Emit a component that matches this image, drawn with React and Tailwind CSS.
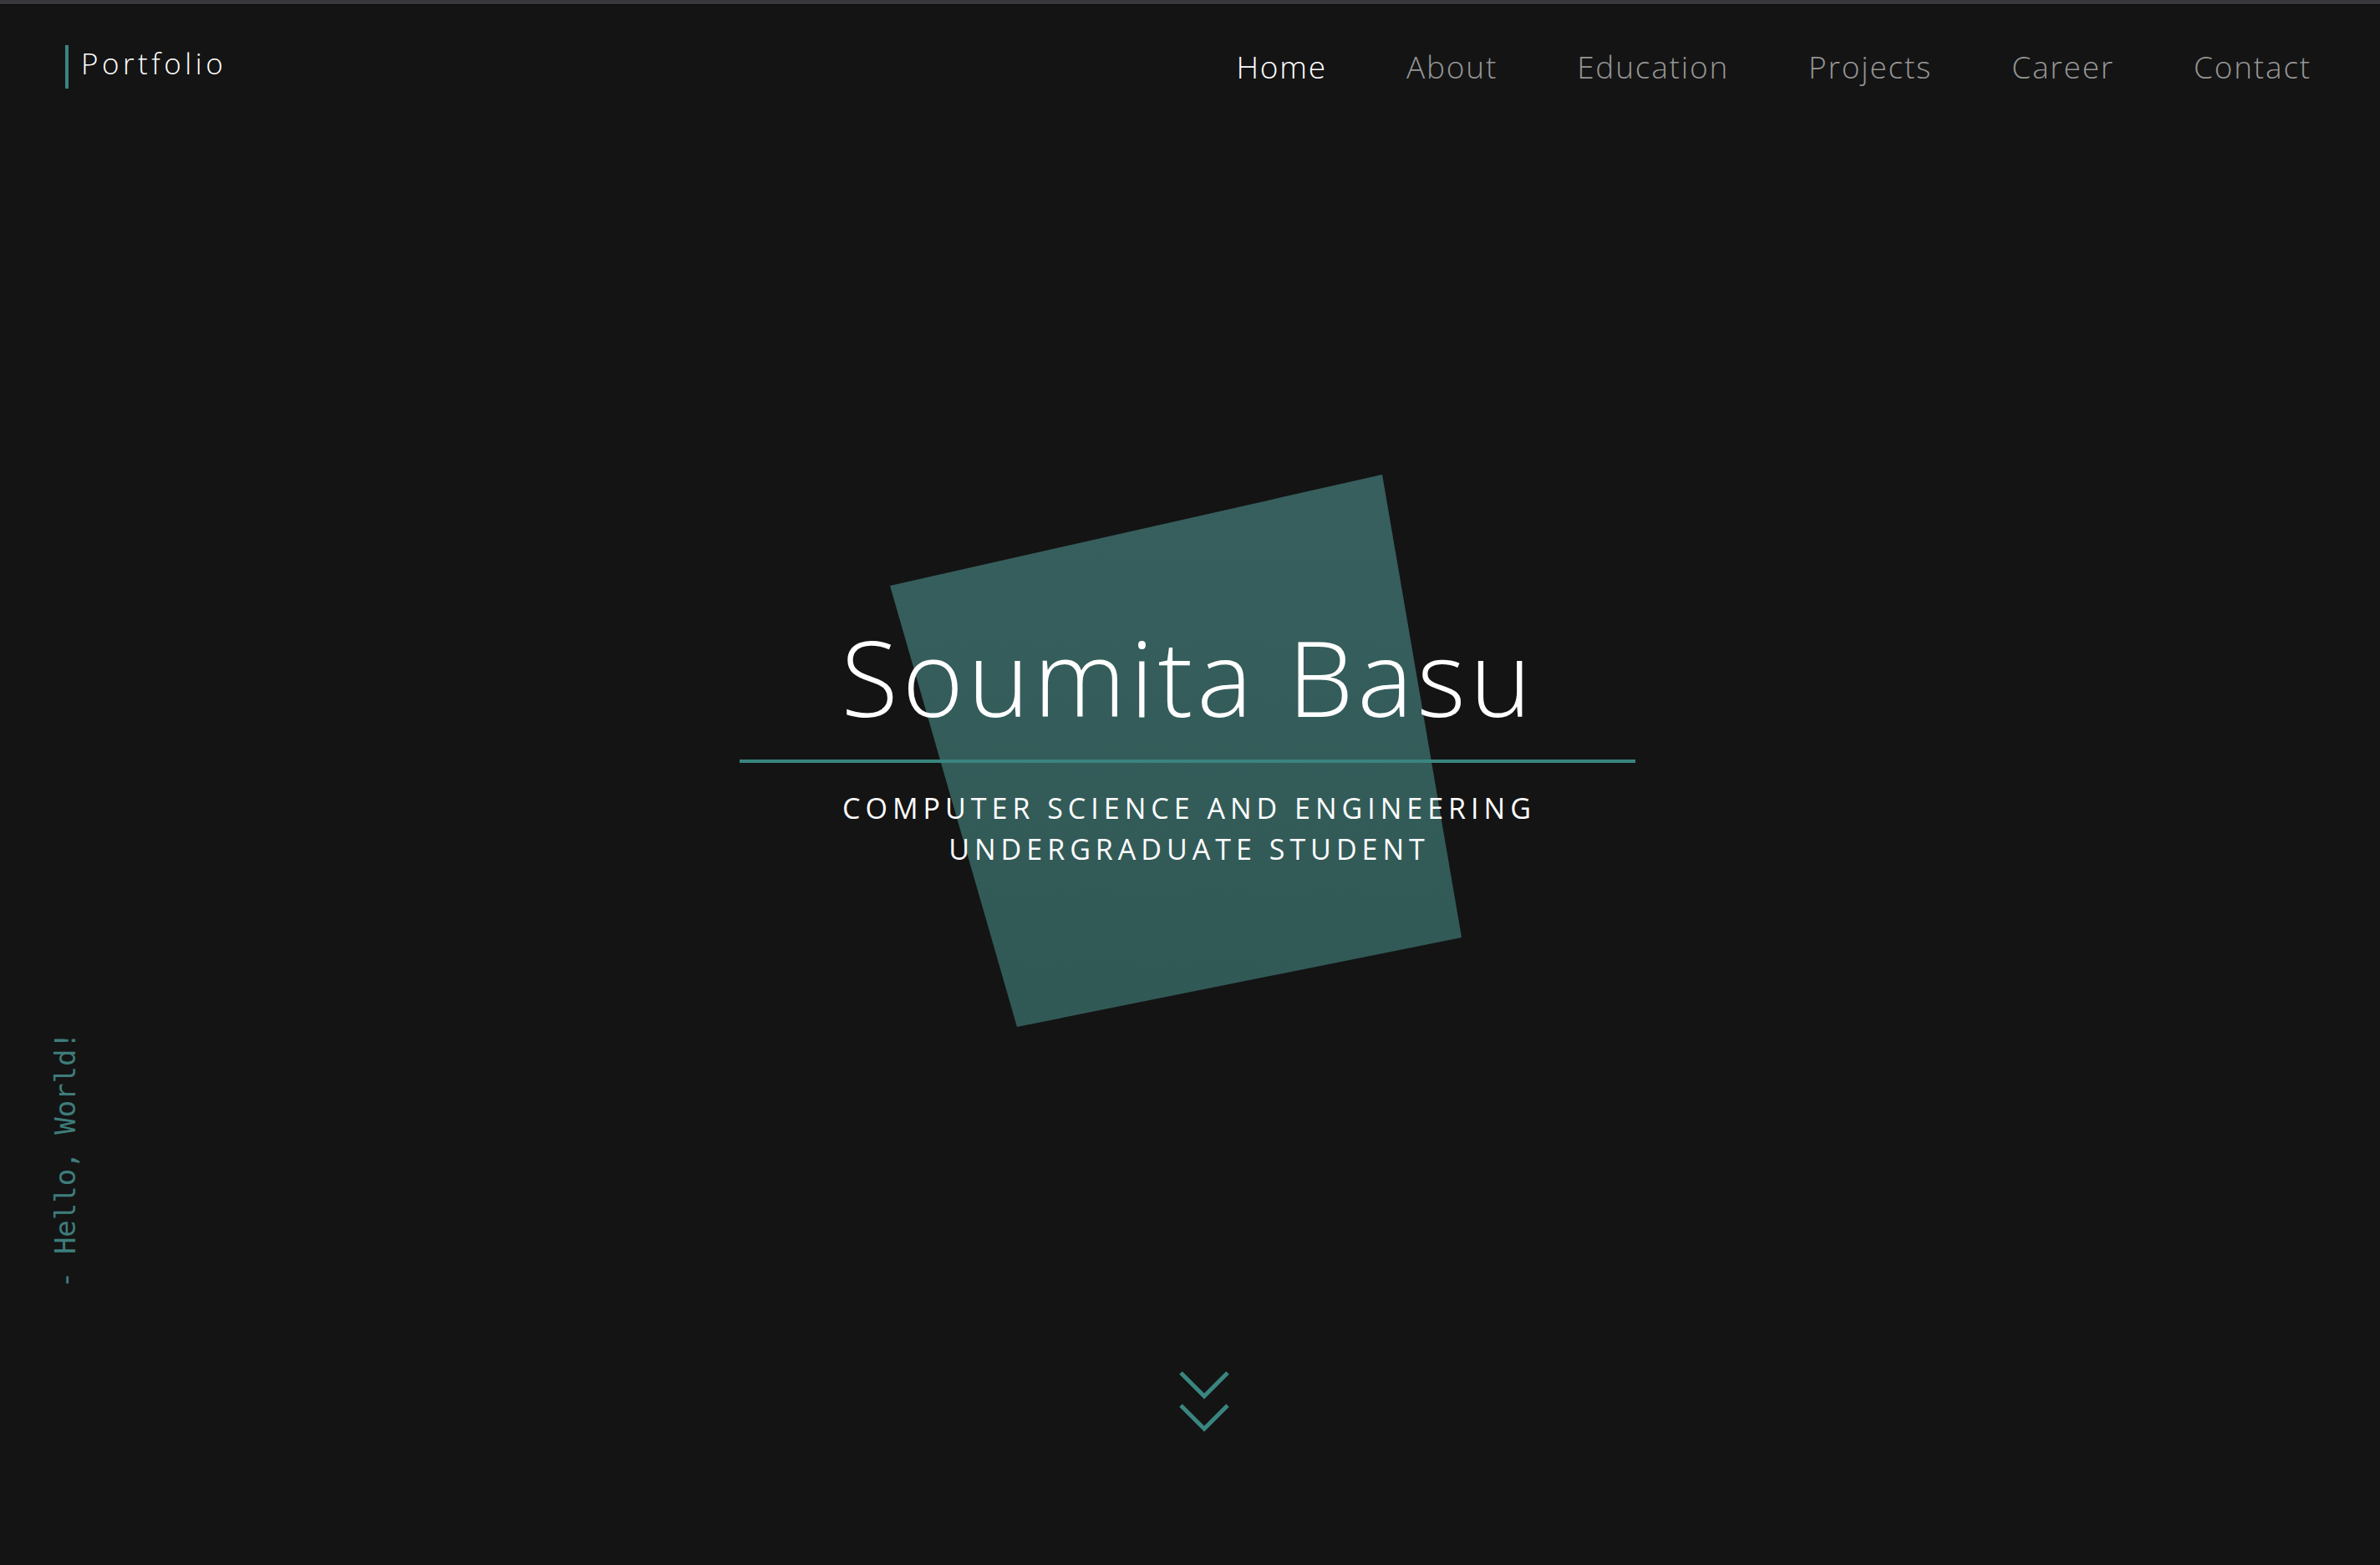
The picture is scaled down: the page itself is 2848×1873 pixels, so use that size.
import React from 'react';

const NAV_ITEMS = ['Home', 'About', 'Education', 'Projects', 'Career', 'Contact'];

const SANS = "font-['Open_Sans','Liberation_Sans',sans-serif]";

function Backdrop() {
  // tilted teal card behind the name
  return (
    <svg className="absolute left-[1060px] top-[560px]" width="700" height="680" viewBox="0 0 700 680">
      <defs>
        <linearGradient id="card" x1="0" y1="0" x2="0" y2="1">
          <stop offset="0" stopColor="#375f5e" />
          <stop offset="1" stopColor="#305955" />
        </linearGradient>
      </defs>
      <polygon points="5,141 594,8 689,562 157,669" fill="url(#card)" />
    </svg>
  );
}

function ScrollHint() {
  return (
    <svg className="absolute left-[1410px] top-[1639px]" width="62" height="76" viewBox="0 0 62 76" fill="none"
      stroke="#3a8580" strokeWidth="5">
      <path d="M3 4 L31 32 L59 4" />
      <path d="M3 43 L31 71 L59 43" />
    </svg>
  );
}

export default function App() {
  return (
    <div className={`relative w-full h-[1873px] bg-[#141414] overflow-hidden ${SANS}`}>
      <div className="h-[6px] bg-[#38373c] border-b border-[#0a0a0a]" />
      <Backdrop />

      <header className="relative flex justify-between items-start pl-[78px] pr-[82px] pt-[48px]">
        <div className="flex items-start">
          <span className="block w-[4px] h-[52px] bg-[#3a8580]" />
          <span className="ml-[15px] mt-[4px] text-[35px] leading-none font-light tracking-[4.5px] text-white">
            Portfolio
          </span>
        </div>
        <nav className="flex gap-[95px] mt-[7px]">
          {NAV_ITEMS.map((label, i) => (
            <a key={label} href="#"
              className={`text-[37px] leading-none font-light tracking-[1.8px] ${i === 0 ? 'text-white' : 'text-[#969696]'}`}>
              {label}
            </a>
          ))}
        </nav>
      </header>

      <main className="relative flex flex-col items-center pt-[641px]">
        <h1 className="text-[125px] leading-none font-light tracking-[5px] text-white -ml-[4px]">Soumita Basu</h1>
        <div className="mt-[37px] w-[1072px] h-[4px] bg-[#3a8580] -ml-[6px]" />
        <p className="mt-[30px] text-[34px] leading-[49px] font-normal tracking-[6px] text-white text-center uppercase -ml-[2px]">
          Computer Science and Engineering
          <br />
          Undergraduate Student
        </p>
      </main>

      <div className="absolute left-[61px] top-[1235px] [writing-mode:vertical-rl] rotate-180 font-['DejaVu_Sans_Mono',monospace] text-[34px] leading-none text-[#3e7d7b]">
        - Hello, World!
      </div>

      <ScrollHint />
    </div>
  );
}
